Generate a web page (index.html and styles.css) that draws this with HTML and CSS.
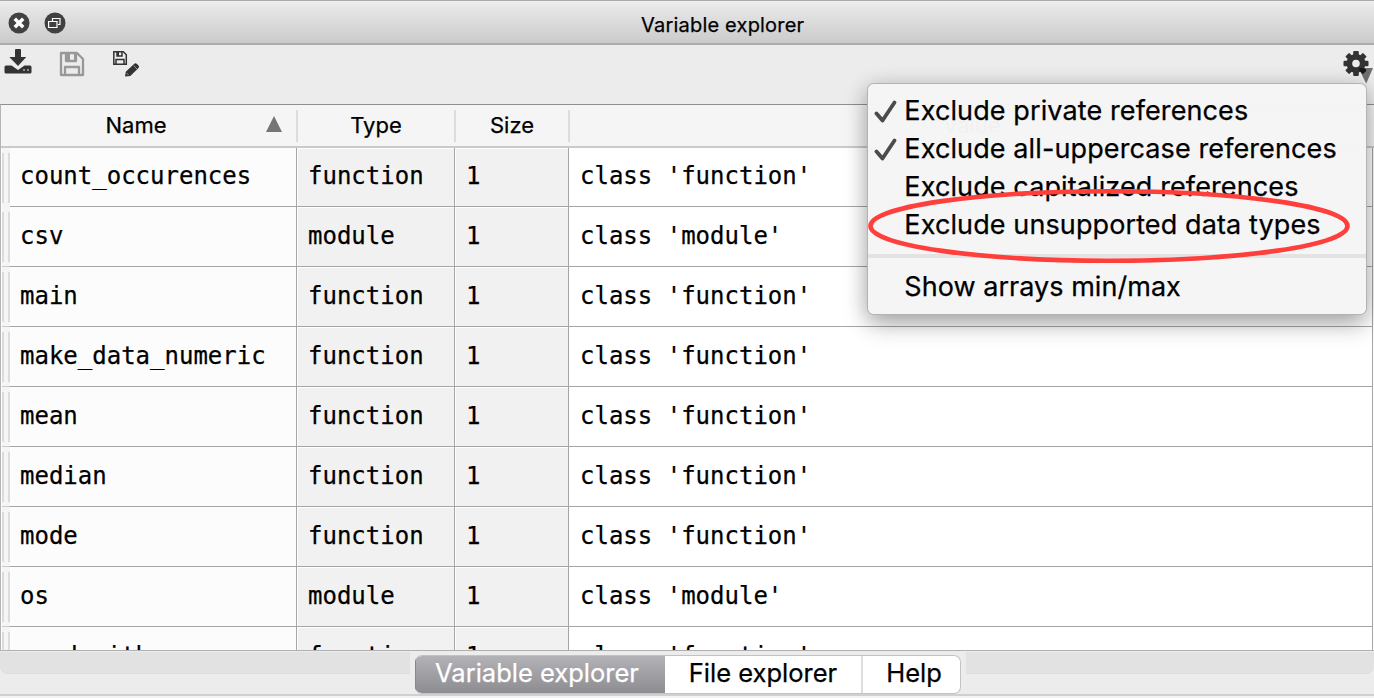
FILE: index.html
```html
<!DOCTYPE html>
<html lang="en">
<head>
<meta charset="utf-8">
<title>Variable explorer</title>
<link rel="stylesheet" href="styles.css">
</head>
<body>
<div class="window">
  <header class="titlebar">
    <svg class="round" viewBox="0 0 22 22"><circle cx="11" cy="11" r="10.500" fill="#414141"/><path d="M6.800 6.800l8.400 8.400M15.200 6.800l-8.400 8.400" stroke="#fff" stroke-width="3.500"/></svg>
    <svg class="round" viewBox="0 0 22 22"><circle cx="11" cy="11" r="10.500" fill="#414141"/><path d="M8.500 9V6.500h7.500v6H14M4.600 9.500h8.400v6H4.600z" fill="none" stroke="#fff" stroke-width="1.200"/></svg>
    <h1 class="title"><span>Variable explorer</span></h1>
  </header>
  <div class="toolbar">
    <svg class="i-import" viewBox="0 0 28 26"><path d="M11 1q0-1 1-1h4q1 0 1 1v7h5.300L14 17 5.300 8H11zM2 16.500h5.500L14 21l6.500-4.500H26q1.500 0 1.500 1.500v5q0 1.500-1.500 1.500H2Q.5 24.500.5 23v-5q0-1.500 1.500-1.500z" fill="#333"/><path d="M19 21h2M23 21h2" stroke="#aaa" stroke-width="1.300"/></svg>
    <svg class="i-save" viewBox="0 0 26 26"><path d="M2 2h16l6 6v16H2zM6 24v-8h14v8M7 2v8h10V2" fill="none" stroke="#989898" stroke-width="2.300" stroke-linejoin="round"/><path d="M7 2h4v8H7zM15 2h3v8h-3z" fill="#989898"/></svg>
    <svg class="i-saveas" viewBox="0 0 28 28"><path d="M1.800 1.800h9.500l3 3v9.500H1.800zM4 14v-4.500h8V14M5 2v4h5V2" fill="none" stroke="#333" stroke-width="1.500"/><path d="M5 2h2v4H5z" fill="#333"/><path d="M13 26.500l.8-4.800L22 14q1.500-1.500 3 0l1.500 1.500q1.200 1.300 0 2.500L18.300 26z" fill="#333"/><path d="M21.500 15.500l4 4M14.500 23l2 2" stroke="#bbb" stroke-width=".7"/></svg>
    <svg class="i-gear" viewBox="0 0 32 34"><g fill="#333"><circle cx="13" cy="13.500" r="9.500"/><rect x="10.200" y="1" width="5.600" height="25" rx="1"/><rect x=".5" y="10.700" width="25" height="5.600" rx="1"/><rect x="10.200" y="1" width="5.600" height="25" rx="1" transform="rotate(45 13 13.500)"/><rect x="10.200" y="1" width="5.600" height="25" rx="1" transform="rotate(-45 13 13.500)"/></g><circle cx="13" cy="13.500" r="3.800" fill="#ececec"/><path d="M15.500 18H30l-6.800 15.500z" fill="#000" fill-opacity=".53"/></svg>
  </div>
  <main class="table">
    <div class="head">
      <div class="hc h-name"><span>Name</span><svg class="sort" viewBox="0 0 16 16"><path d="M8 0l8 16H0z" fill="#757575"/></svg></div>
      <div class="hc h-type"><span>Type</span></div>
      <div class="hc h-size"><span>Size</span></div>
      <div class="hc h-value"><span>Value</span></div>
    </div>
    <div class="row first"><i class="grip"></i><b class="name">count_occurences</b><b class="type">function</b><b class="size">1</b><b class="value">class 'function'</b></div>
    <div class="row"><i class="grip"></i><b class="name">csv</b><b class="type">module</b><b class="size">1</b><b class="value">class 'module'</b></div>
    <div class="row"><i class="grip"></i><b class="name">main</b><b class="type">function</b><b class="size">1</b><b class="value">class 'function'</b></div>
    <div class="row"><i class="grip"></i><b class="name">make_data_numeric</b><b class="type">function</b><b class="size">1</b><b class="value">class 'function'</b></div>
    <div class="row"><i class="grip"></i><b class="name">mean</b><b class="type">function</b><b class="size">1</b><b class="value">class 'function'</b></div>
    <div class="row"><i class="grip"></i><b class="name">median</b><b class="type">function</b><b class="size">1</b><b class="value">class 'function'</b></div>
    <div class="row"><i class="grip"></i><b class="name">mode</b><b class="type">function</b><b class="size">1</b><b class="value">class 'function'</b></div>
    <div class="row"><i class="grip"></i><b class="name">os</b><b class="type">module</b><b class="size">1</b><b class="value">class 'module'</b></div>
    <div class="row"><i class="grip"></i><b class="name">read_with</b><b class="type">function</b><b class="size">1</b><b class="value">class 'function'</b></div>
  </main>
  <footer class="bottom">
    <div class="strip left"></div>
    <nav class="tabs">
      <div class="tab active"><span>Variable explorer</span></div>
      <div class="tab file"><span>File explorer</span></div>
      <div class="tab help"><span>Help</span></div>
    </nav>
    <div class="strip right"></div>
  </footer>
</div>
<div class="menu">
  <div class="item"><svg class="check" viewBox="0 0 24 24"><path d="M2.500 13.500l6 7L20.500 2.500" fill="none" stroke="#4b4b4b" stroke-width="3.800" stroke-linecap="round" stroke-linejoin="round"/></svg><span>Exclude private references</span></div>
  <div class="item"><svg class="check" viewBox="0 0 24 24"><path d="M2.500 13.500l6 7L20.500 2.500" fill="none" stroke="#4b4b4b" stroke-width="3.800" stroke-linecap="round" stroke-linejoin="round"/></svg><span>Exclude all-uppercase references</span></div>
  <div class="item"><span>Exclude capitalized references</span></div>
  <div class="item"><span>Exclude unsupported data types</span></div>
  <div class="sep"></div>
  <div class="item show"><span>Show arrays min/max</span></div>
</div>
<svg class="mark" viewBox="0 0 484 76"><ellipse cx="242" cy="38" rx="238.500" ry="34.800" fill="none" stroke="#ff3f3b" stroke-width="4.600"/></svg>
</body>
</html>
```
FILE: styles.css
```css
* { box-sizing: border-box; }
body { margin: 0; overflow: hidden; background: #ececec; font-family: Inter, "Liberation Sans", sans-serif; color: #000; -webkit-text-stroke: .25px; }
svg { display: block; flex: none; }
span { white-space: nowrap; }
.window { width: 1374px; height: 698px; display: flex; flex-direction: column; overflow: hidden; }
.titlebar { height: 45px; flex: none; display: flex; align-items: center; gap: 14px; padding: 1px 0 0 7.500px; border-top: 1px solid #aaa; border-bottom: 2px solid #acacac; background: linear-gradient(#efefef, #e8e8e8 10%, #cbcbcb); }
.round { width: 22px; height: 22px; }
.title { margin: 0; padding: 4px 0 0 561.500px; font-size: 20px; line-height: 26px; font-weight: 400; letter-spacing: .2px; }
.toolbar { height: 59px; flex: none; display: flex; align-items: flex-start; padding: 4px 0 0 4px; }
.i-import { width: 28px; height: 26px; }
.i-save { width: 26px; height: 26px; margin: 2px 0 0 27px; }
.i-saveas { width: 28px; height: 28px; margin: 1px 0 0 27px; }
.i-gear { width: 32px; height: 34px; margin: 1px -1px 0 auto; }
.table { height: 547px; flex: none; overflow: hidden; border: solid #8f8f8f; border-width: 1px 0 1px 1px; border-left-color: #b5b5b5; border-bottom-color: #b0b0b0; background: #fff; }
.head { height: 43px; display: flex; padding-top: 5px; background: #f5f5f5; border-bottom: 2px solid #cacaca; font-size: 22px; }
.hc { height: 32px; display: flex; align-items: center; justify-content: center; padding-bottom: 2px; border-right: 2px solid #dcdcdc; position: relative; }
.h-name { width: 297px; padding-right: 25px; }
.h-type { width: 158px; }
.h-size { width: 114px; }
.h-value { flex: 1; border-right: 0; }
.sort { width: 16px; height: 16px; position: absolute; right: 14px; top: 6px; }
.row { height: 60px; display: flex; align-items: flex-end; width: 1372px; font: 24px/59px "DejaVu Sans Mono", monospace; }
.row.first { height: 59px; line-height: 57px; }
.row b { font-weight: 400; border-right: 1px solid #a5a5a5; border-bottom: 1px solid #a5a5a5; white-space: pre; height: 100%; }
.grip { width: 9px; height: 60px; flex: none; border-left: 1px solid #fff; background: linear-gradient(#f5f5f5 5px, transparent 5px, transparent 55px, #f5f5f5 55px, #f5f5f5 59px, #cacaca 59px), linear-gradient(90deg, #dcdcdc 2px, #f5f5f5 2px, #f5f5f5 6px, #dcdcdc 6px); }
.first .grip { height: 59px; }
.name { width: 287px; padding-left: 10px; background: #fcfcfc; }
.type { width: 158px; padding-left: 11px; background: #f1f1f1; box-shadow: inset 1px 1px #fff; }
.size { width: 114px; padding-left: 11px; background: #f1f1f1; box-shadow: inset 1px 1px #fff; }
.value { flex: 1; padding-left: 11px; background: #fff; }
.bottom { height: 47px; display: flex; border-bottom: 2px solid #f3f3f3; box-shadow: inset 0 -2px #d0d0d0; }
.strip { height: 22px; margin-top: 1px; background: #e2e2e2; border-bottom: 1px solid #dcdcdc; }
.left { width: 410px; border-radius: 0 0 0 8px; }
.right { flex: 1; border-radius: 0 0 8px 0; }
.tabs { width: 546px; height: 39px; margin: 4px 5px 0; display: flex; border-radius: 7px; overflow: hidden; background: #fff; border: 1px solid #c3c3c3; border-left-width: 0; font-size: 25.500px; line-height: 34px; }
.tab { display: flex; justify-content: center; }
.active { width: 250px; padding-right: 6px; color: #fff; background: linear-gradient(#b3b2b7, #8d8c91); box-shadow: inset 1px 0 #88878c; }
.file { width: 198px; border-right: 2px solid #dedede; }
.help { flex: 1; padding-left: 5px; }
.menu { position: absolute; left: 868px; top: 84px; width: 498px; height: 230px; padding-top: 8px; border-radius: 6px; background: rgba(245,245,245,.985); box-shadow: 0 0 0 1px #b3b3b3, 0 10px 24px rgba(0,0,0,.3), 0 2px 22px rgba(0,0,0,.14); font-size: 27px; line-height: 38px; letter-spacing: .11px; }
.item { height: 38px; padding-left: 36.300px; position: relative; }
.show { letter-spacing: .04px; }
.check { position: absolute; left: 5.500px; top: 7.500px; width: 24px; height: 24px; }
.sep { height: 4px; margin: 10px 0; background: #e3e3e3; }
.mark { position: absolute; left: 867px; top: 187.500px; width: 484px; height: 76px; }
```
